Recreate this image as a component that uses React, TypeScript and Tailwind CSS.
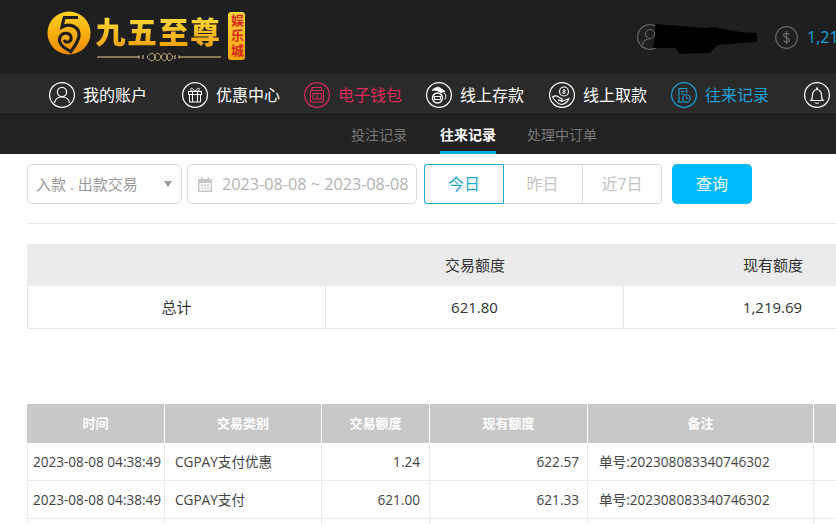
import type { ReactNode } from "react";

const FONT = "font-['Open_Sans','Noto_Sans_CJK_SC',sans-serif]";

const Circle = ({ size = 26, color = "#fff", children }: { size?: number; color?: string; children: ReactNode }) => (
  <svg width={size} height={size} viewBox="0 0 26 26" fill="none" stroke={color} strokeWidth="1" className="shrink-0">
    <circle cx="13" cy="13" r="12.4" strokeWidth="1.2" />
    {children}
  </svg>
);

const UserIcon = () => (
  <Circle>
    <circle cx="13" cy="10" r="4.6" strokeWidth="1.2" />
    <path d="M5.5 21c.6-4 3-6 7.500-6s6.900 2 7.500 6" strokeWidth="1.2" />
  </Circle>
);

const GiftIcon = () => (
  <Circle>
    <rect x="6.500" y="9.500" width="13" height="3" />
    <path d="M7.500 12.500V20h11v-7.500M10.500 9.500V20M15.500 9.500V20" />
    <path d="M13 9.500C11 6 8.500 5.500 8.500 7.500c0 1.500 2.500 2 4.500 2zm0 0c2-3.500 4.500-4 4.500-2 0 1.500-2.500 2-4.500 2z" />
  </Circle>
);

const WalletIcon = () => (
  <Circle color="#d92b5c">
    <path d="M8 5.500h9.500v3H8z" strokeWidth="1.100" />
    <rect x="6.500" y="8.500" width="13" height="11.500" rx="1" strokeWidth="1.100" />
    <rect x="9" y="11.500" width="8.500" height="5.500" strokeWidth="1.100" />
    <path d="M13.200 12.500v3.500" />
  </Circle>
);

const DepositIcon = () => (
  <Circle>
    <path d="M6 8.500c3-3 6-4 8-2.500l5 3.500-4 1-3-1.500" fill="#fff" strokeWidth="1" />
    <circle cx="11.500" cy="16" r="5" strokeWidth="1.400" />
    <rect x="8.500" y="14.500" width="6" height="3" strokeWidth="1" />
    <path d="M18 11c2 1 2.500 4 1 6.500" />
  </Circle>
);

const WithdrawIcon = () => (
  <Circle>
    <circle cx="15" cy="9.500" r="4.500" strokeWidth="1.200" />
    <path d="M15 7v5M13.500 8.500c1-1 3-.8 3 .3s-3 .8-3 1.800 2 1 3 .2" strokeWidth=".8" />
    <path d="M3.500 15c2-1.500 4-1.500 6 0l3 1.500c1.500.5 1 2-.5 1.800L9 18l4 1.500 7-3c-1 3-3 5-7 6-3-.2-6-2-9.500-7.500z" strokeWidth="1.100" />
  </Circle>
);

const RecordIcon = () => (
  <Circle color="#1d9fd6">
    <path d="M8 20V6.500h7.500V11M6.500 20h6" strokeWidth="1.100" />
    <path d="M10 9.500h3.500M10 12h3" />
    <circle cx="15.500" cy="16.500" r="3.800" strokeWidth="1.100" />
    <path d="M15.500 14.500v2.200h2" />
  </Circle>
);

const BellIcon = () => (
  <Circle>
    <path d="M7 18.500c1.500-1.500 1.500-3 1.500-5.500 0-3 2-5.500 4.500-5.500s4.500 2.500 4.500 5.500c0 2.500 0 4 1.500 5.500z" strokeWidth="1.200" />
    <path d="M11 20.500c.8 1 3.200 1 4 0M12.500 7v-1h1v1" strokeWidth="1.100" />
  </Circle>
);

const Logo = () => (
  <div className="flex items-start">
    <svg width="44" height="44" viewBox="0 0 44 44" className="mt-[11px] shrink-0">
      <defs>
        <linearGradient id="coin" x1="0" y1="0" x2="0" y2="1">
          <stop offset="0" stopColor="#ffd21f" />
          <stop offset="1" stopColor="#ef8a00" />
        </linearGradient>
      </defs>
      <circle cx="22" cy="22" r="21.500" fill="url(#coin)" />
      <path d="M16 6.500h15" stroke="#1f1f1f" strokeWidth="3" fill="none" />
      <path d="M17 7 L15 16 C22 12 33 15 32 25 C31 32 26 37 23 42" stroke="#1f1f1f" strokeWidth="3.200" fill="none" />
      <path d="M23 40 C15 36 11 31 13 26 C15 21 23 21 24 26 C25 31 19 33 17 29" stroke="#1f1f1f" strokeWidth="3" fill="none" />
    </svg>
    <div className="ml-[4px] mt-[13px] flex w-[127px] flex-col items-center">
      <span className="bg-gradient-to-b from-[#ffe23a] to-[#f09a00] bg-clip-text text-[30px] leading-[38px] font-black tracking-[1.500px] whitespace-nowrap text-transparent">九五至尊</span>
      <svg width="124" height="10" viewBox="0 0 124 10" className="mt-px" fill="none" stroke="#e6d08c">
        <path d="M0 5h42M82 5h42" strokeWidth="1" />
        <path d="M42 3.500v3M46 3v4M78 3v4M82 3.500v3" strokeWidth="1" />
        <path d="M50 5c4-5 7-5 8 0s4 5 6 0 5-5 6 0 3 5 6 0M50 5c4 5 7 5 8 0s4-5 6 0 5 5 6 0 3-5 6 0" strokeWidth=".8" />
      </svg>
    </div>
    <div className="ml-[6px] mt-[12px] flex h-[48px] w-[17px] items-center justify-center rounded-[3px] bg-gradient-to-b from-[#ffd83a] to-[#f2a400] text-[13px] leading-[17px] font-bold tracking-[2px] text-[#d8261c] [writing-mode:vertical-rl]">
      娱乐城
    </div>
  </div>
);

const navItems = [
  { label: "我的账户", icon: <UserIcon />, cls: "text-white", gap: "mr-[35px]" },
  { label: "优惠中心", icon: <GiftIcon />, cls: "text-white", gap: "mr-[24px]" },
  { label: "电子钱包", icon: <WalletIcon />, cls: "text-[#d92b5c]", gap: "mr-[24px]" },
  { label: "线上存款", icon: <DepositIcon />, cls: "text-white", gap: "mr-[25px]" },
  { label: "线上取款", icon: <WithdrawIcon />, cls: "text-white", gap: "mr-[24px]" },
  { label: "往来记录", icon: <RecordIcon />, cls: "text-[#1d9fd6]", gap: "mr-[35px]" },
];

const rows = [
  ["2023-08-08 04:38:49", "CGPAY支付优惠", "1.24", "622.57", "单号:202308083340746302"],
  ["2023-08-08 04:38:49", "CGPAY支付", "621.00", "621.33", "单号:202308083340746302"],
  ["", "", "", "", ""],
];

const headers = ["时间", "交易类别", "交易额度", "现有额度", "备注", ""];

const App = () => {
  return (
    <div className={`${FONT} h-[524px] w-[836px] overflow-hidden bg-white`}>
      <header className="flex h-[74px] bg-[#1f1f1f] pl-[47px]">
        <Logo />
        <div className="relative ml-[392px] flex h-[74px] items-center">
          <Circle color="#666">
            <circle cx="13" cy="10" r="4.500" strokeWidth="1.200" />
            <path d="M5.500 21c.6-4 3-6 7.500-6" strokeWidth="1.200" />
          </Circle>
          <svg width="112" height="36" viewBox="0 0 112 36" className="absolute left-[13px] top-[21px]">
            <path d="M5 3l52 4 6-1 27 5 17 1v9l-40 3-7 8-30 1-5-6-22 0 2-12z" fill="#000" />
          </svg>
          <div className="ml-[112px] flex items-center gap-[9px]">
            <svg width="23" height="23" viewBox="0 0 23 23" fill="none" stroke="#666" className="shrink-0">
              <circle cx="11.500" cy="11.500" r="10.800" strokeWidth="1.200" />
              <path d="M11.500 5v13M14.500 8.500c-1-1.500-6-1.800-6 .8s6 2 6 4.800-5 2.300-6 .5" strokeWidth="1.200" />
            </svg>
            <span className="text-[16px] text-[#1d9fd6]">1,219.69</span>
          </div>
        </div>
      </header>

      <nav className="flex h-[41px] items-center border-b border-[#161616] bg-[#2a2a2a] pt-[2px] pl-[49px] text-[16px] whitespace-nowrap">
        {navItems.map((item) => (
          <div key={item.label} className={`flex items-center gap-[8px] ${item.gap}`}>
            {item.icon}
            <span className={item.cls}>{item.label}</span>
          </div>
        ))}
        <BellIcon />
      </nav>

      <div className="flex h-[39px] items-stretch bg-[#222222] pl-[351px] text-[14px] whitespace-nowrap text-[#777777]">
        <span className="flex items-center">投注记录</span>
        <span className="ml-[33px] flex items-center border-b-[3px] border-[#00a9e0] pt-[3px] font-bold text-white">往来记录</span>
        <span className="ml-[31px] flex items-center">处理中订单</span>
      </div>

      <main className="pl-[27px]">
        <div className="flex items-center pt-[10px] pb-[19px] text-[16px]">
          <div className="flex h-[40px] w-[155px] items-center justify-between rounded-[5px] border border-[#dddddd] px-[9px] pl-[8px] text-[15px] whitespace-nowrap text-[#999999]">
            <span>入款 . 出款交易</span>
            <span className="h-0 w-0 border-x-[4px] border-t-[6px] border-x-transparent border-t-[#999999]" />
          </div>
          <div className="ml-[5px] flex h-[40px] w-[230px] items-center gap-[9px] rounded-[5px] border border-[#dddddd] pl-[9px] text-[16.200px] whitespace-nowrap text-[#b3b3b3]">
            <svg width="16" height="16" viewBox="0 0 16 16" className="shrink-0" fill="#c8c8c8">
              <path d="M1 3h14v13H1zM2.500 7v7.500h11V7z" />
              <path d="M4 1h1.500v3.500H4zM10.500 1H12v3.500h-1.500z" />
              <path d="M4 8.500h2V10H4zM7 8.500h2V10H7zM10 8.500h2V10h-2zM4 11.500h2V13H4zM7 11.500h2V13H7zM10 11.500h2V13h-2z" />
            </svg>
            <span>2023-08-08 ~ 2023-08-08</span>
          </div>
          <div className="ml-[7px] flex h-[40px] w-[238px] rounded-[3px] border border-[#dddddd] text-[#c4c4c4]">
            <span className="-m-px flex w-[80px] items-center justify-center rounded-l-[3px] border border-[#1fa9d6] text-[#1fa9d6]">今日</span>
            <span className="flex w-[80px] items-center justify-center border-r border-[#dddddd]">昨日</span>
            <span className="flex flex-1 items-center justify-center">近7日</span>
          </div>
          <button className="ml-[10px] h-[40px] w-[80px] rounded-[5px] bg-[#00baff] text-[16px] text-white">查询</button>
        </div>

        <div className="border-t border-[#e6e6e6] pt-[20px]">
          <div className="grid w-[895px] grid-cols-[299px_298px_298px] text-[15px] text-[#333333]">
            <div className="h-[42px] bg-[#ebebeb]" />
            <div className="flex h-[42px] items-center justify-center bg-[#ebebeb]">交易额度</div>
            <div className="flex h-[42px] items-center justify-center bg-[#ebebeb]">现有额度</div>
            <div className="flex h-[43px] items-center justify-center border-x border-b border-[#e6e6e6]">总计</div>
            <div className="flex h-[43px] items-center justify-center border-r border-b border-[#e6e6e6]">621.80</div>
            <div className="flex h-[43px] items-center justify-center border-r border-b border-[#e6e6e6]">1,219.69</div>
          </div>
        </div>

        <div className="mt-[75px] grid w-[900px] grid-cols-[138px_157px_108px_158px_226px_113px] text-[13.600px] text-[#444444]">
          {headers.map((h, i) => (
            <div key={i} className="flex h-[39px] items-center justify-center border-r border-white bg-[#c8c8c8] text-[13px] font-bold text-white">{h}</div>
          ))}
          {rows.map((row, r) => (
            <div key={r} className="contents">
              <div className="flex h-[38px] items-center justify-center border-r border-b border-l border-[#ececec] pt-px pl-[2px] whitespace-nowrap">{row[0]}</div>
              <div className="flex h-[38px] items-center border-r border-b border-[#ececec] pt-px pl-[10px]">{row[1]}</div>
              <div className="flex h-[38px] items-center justify-end border-r border-b border-[#ececec] pt-px pr-[9px]">{row[2]}</div>
              <div className="flex h-[38px] items-center justify-end border-r border-b border-[#ececec] pt-px pr-[8px]">{row[3]}</div>
              <div className="flex h-[38px] items-center border-r border-b border-[#ececec] pt-px pl-[11px]">{row[4]}</div>
              <div className="h-[38px] border-b border-[#ececec]" />
            </div>
          ))}
        </div>
      </main>
    </div>
  );
};

export default App;
